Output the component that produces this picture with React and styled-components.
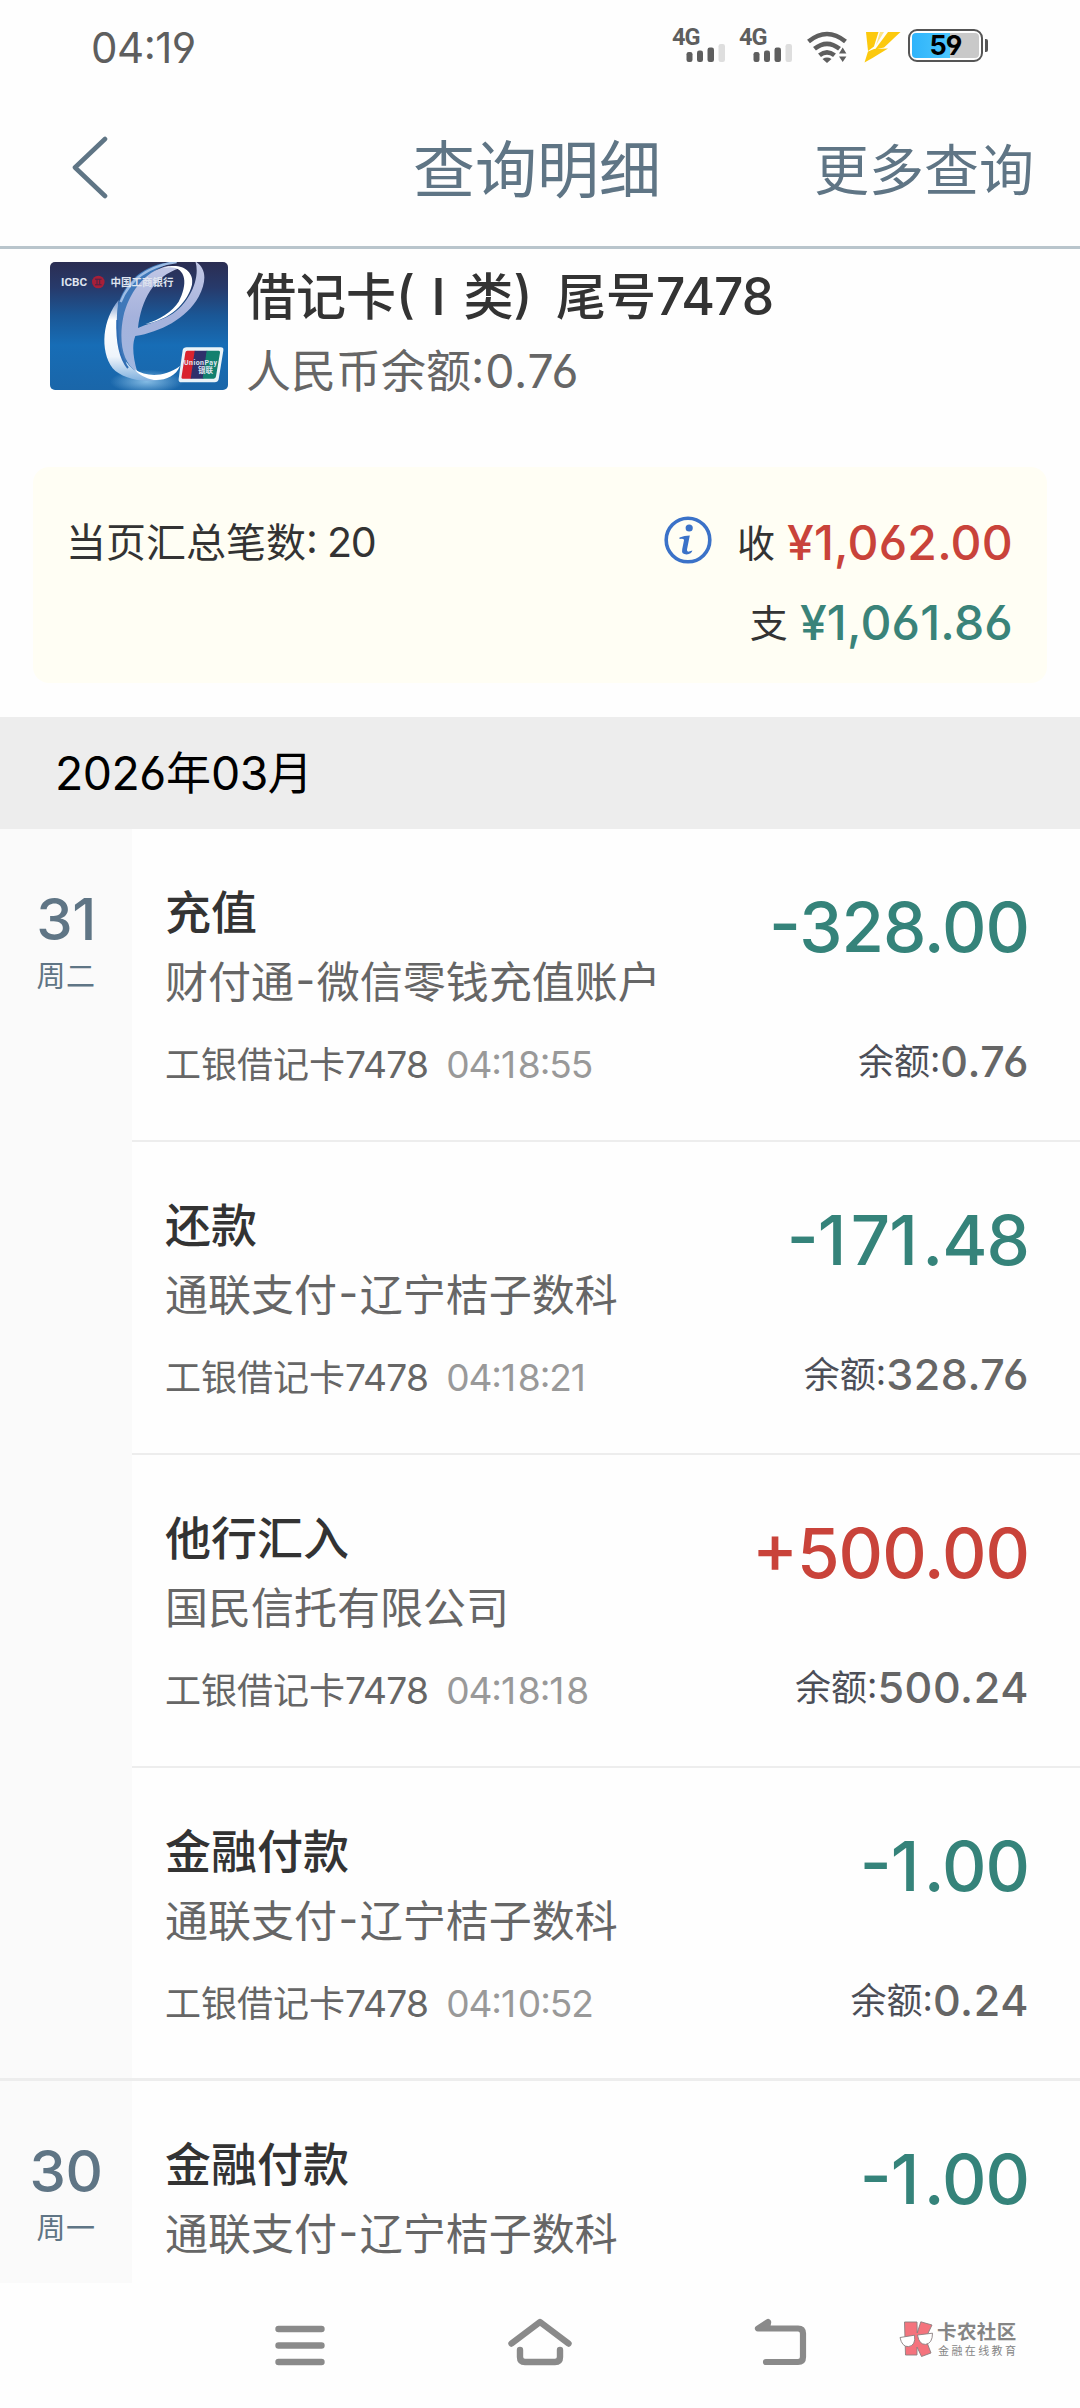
import React from 'react';
import styled, { createGlobalStyle } from 'styled-components';

const days = [
    {
        day: '31',
        week: '周二',
        items: [
            { title: '充值', desc: ['财付通', '微信零钱充值账户'], time: '04:18:55', sign: '-', amount: '328.00', balance: '0.76' },
            { title: '还款', desc: ['通联支付', '辽宁桔子数科'], time: '04:18:21', sign: '-', amount: '171.48', balance: '328.76' },
            { title: '他行汇入', desc: ['国民信托有限公司'], time: '04:18:18', sign: '+', amount: '500.00', balance: '500.24' },
            { title: '金融付款', desc: ['通联支付', '辽宁桔子数科'], time: '04:10:52', sign: '-', amount: '1.00', balance: '0.24' },
        ]
    },
    {
        day: '30',
        week: '周一',
        items: [
            { title: '金融付款', desc: ['通联支付', '辽宁桔子数科'], sign: '-', amount: '1.00' },
        ]
    },
];

// gives the narrow "1" a little more room on its right
function Digits({ value }) {
    return value.split(/(1)/).map((s, i) => s === '1' ? <One key={i}>1</One> : s);
}

function Signal() {
    return (
        <SignalLayout>
            <span>4G</span>
            <svg width="40" height="20" viewBox="0 0 40 20">
                <rect x="0.5" y="9" width="6" height="10" rx="2.2" fill="#5e5e5e" />
                <rect x="11" y="7.5" width="6" height="11.5" rx="2.2" fill="#5e5e5e" />
                <rect x="21.5" y="4.5" width="6.5" height="14.5" rx="2.2" fill="#5e5e5e" />
                <rect x="32.5" y="1" width="6.5" height="18" rx="2.2" fill="#dedede" />
            </svg>
        </SignalLayout>
    );
}

function WifiIcon() {
    return (
        <svg width="40" height="32" viewBox="0 0 40 32" fill="none" stroke="#5e5e5e" strokeWidth="4.6">
            <path d="M1.5 10.5Q20 -4.5 38.5 10.5" />
            <path d="M7.5 17.8Q20 7.8 32.5 17.8" />
            <path d="M12.5 24.3Q20 18.3 27.5 24.3" />
            <path d="M15.5 28Q20 25.2 24.5 28L20 32Z" fill="#5e5e5e" stroke="none" />
            <path d="M35.7 15L41 23.5V32H31V23.5Z" fill="#fefefe" stroke="none" />
            <path d="M35.7 16.5L39.4 22.5H32ZM35.7 31L39.4 25.5H32Z" fill="#5e5e5e" stroke="none" />
        </svg>
    );
}

function BoltIcon() {
    return (
        <svg width="37" height="31" viewBox="0 0 37 31" fill="#fcc90e">
            <path d="M2 0H14.5L10 14.5L4 19Z" />
            <path d="M24 0H36.5L20 15.5L11 17.5Z" />
            <path d="M4 19.5L10 17L24 16.5L8.5 26L0.5 30.5Z" />
            <path d="M16 0H20L12 13Z" opacity="0.5" />
        </svg>
    );
}

function CardImage() {
    return (
        <svg width="178" height="128" viewBox="0 0 178 128">
            <defs>
                <linearGradient id="cardBg" x1="0" y1="0" x2="0" y2="1">
                    <stop offset="0" stopColor="#2b2d52" />
                    <stop offset="0.2" stopColor="#273a6b" />
                    <stop offset="0.42" stopColor="#1a5796" />
                    <stop offset="0.65" stopColor="#176db6" />
                    <stop offset="1" stopColor="#1a66a9" />
                </linearGradient>
                <linearGradient id="crescent" x1="0" y1="0" x2="0" y2="1">
                    <stop offset="0" stopColor="#6f93c9" />
                    <stop offset="0.25" stopColor="#ffffff" />
                    <stop offset="0.7" stopColor="#eef4fb" />
                    <stop offset="1" stopColor="#7fb0de" />
                </linearGradient>
                <linearGradient id="stem" x1="0" y1="0" x2="0" y2="1">
                    <stop offset="0" stopColor="#c3c8e6" />
                    <stop offset="0.5" stopColor="#a5b2dc" />
                    <stop offset="1" stopColor="#9fb7e0" />
                </linearGradient>
                <radialGradient id="glow">
                    <stop offset="0" stopColor="#8fc4ea" stopOpacity="0.9" />
                    <stop offset="1" stopColor="#8fc4ea" stopOpacity="0" />
                </radialGradient>
                <clipPath id="cardClip"><rect width="178" height="128" rx="5" /></clipPath>
            </defs>
            <g clipPath="url(#cardClip)">
                <rect width="178" height="128" fill="url(#cardBg)" />
                <g transform="scale(0.33333) translate(-150 -66)">
                    <ellipse cx="440" cy="425" rx="110" ry="36" fill="url(#glow)" />
                    <path d="M356 180C308 238 298 330 338 385C362 412 420 430 478 420C430 408 388 392 372 352C350 300 350 240 356 180Z" fill="url(#crescent)" />
                    <path d="M520 66C430 70 372 130 354 195C346 250 350 330 380 378C372 300 372 200 420 135C450 98 480 80 520 66Z" fill="#3f78b9" />
                    <path d="M505 78C430 92 385 165 370 230C356 300 366 370 412 396C398 350 396 312 406 288C480 276 560 236 596 170C622 120 618 84 586 64C602 112 570 190 510 226C480 244 436 254 414 264C424 180 460 110 540 84Z" fill="url(#stem)" />
                    <path d="M490 84C560 70 566 130 536 185C518 214 478 240 436 252C508 240 562 190 576 134C584 92 540 66 490 84Z" fill="#fff" />
                    <path d="M362 186C388 120 440 78 530 66" fill="none" stroke="#9dbce4" strokeWidth="7" />
                    <path d="M352 240C350 300 356 350 384 384" fill="none" stroke="#2f6db4" strokeWidth="6" />
                    <path d="M404 388C440 412 494 412 540 378C528 408 496 422 462 420C438 416 414 404 404 388Z" fill="#fff" />
                    <path d="M548 330Q550 322 560 322H662Q672 322 670 332L656 418Q654 427 644 427H545Q534 427 536 416Z" fill="#eaf3f8" />
                    <path d="M562 332H586L574 416H548Q543 416 545 408L556 338Q557 332 562 332Z" fill="#d9232e" />
                    <path d="M584 332H622L610 416H572Z" fill="#2f2f6b" />
                    <path d="M620 332H656Q661 332 660 338L648 409Q647 416 641 416H608Z" fill="#12806f" />
                </g>
                <CardText x="11" y="23.5" $size={10} textLength="26" lengthAdjust="spacingAndGlyphs">ICBC</CardText>
                <circle cx="48.3" cy="20" r="6.3" fill="#a81f38" />
                <path d="M45 17.2H51.6M45 22.8H51.6M47 17.5V22.5M49.7 17.5V22.5" stroke="#4a2449" strokeWidth="1" />
                <CardText x="60.5" y="23.7" $size={10.5} textLength="63">中国工商银行</CardText>
                <CardText x="134" y="103" $size={7} textLength="33">UnionPay</CardText>
                <CardText x="148" y="111" $size={7.5} textLength="15">银联</CardText>
            </g>
        </svg>
    );
}

function InfoIcon() {
    return (
        <svg width="50" height="50" viewBox="0 0 50 50">
            <circle cx="25" cy="25" r="21.8" fill="none" stroke="#3b72c8" strokeWidth="3.6" />
            <circle cx="26.2" cy="13" r="3.6" fill="#3b72c8" />
            <path d="M16.5 22.5Q21.5 20.5 26.8 20.4L24 34.6Q23.6 37 26 36.6L29.4 35.6Q28.6 39.2 23.6 39.4Q18.2 39.4 19.2 34.2L21 25.2Q21.2 23.4 16.5 24Z" fill="#3b72c8" />
        </svg>
    );
}

function Transaction(attr) {
    return (
        <TransactionLayout>
            <div className="left">
                <div className="title">{attr.title}</div>
                <div className="desc">
                    {attr.desc[0]}
                    {attr.desc[1] && <Dash>-</Dash>}
                    {attr.desc[1]}
                </div>
                {attr.time && (
                    <div className="detail">
                        工银借记卡<Num $spacing="-0.02em">7478</Num>
                        <span className="time"><Num><Digits value={attr.time} /></Num></span>
                    </div>
                )}
            </div>
            <div className="right">
                <Amount $income={attr.sign === '+'}>{attr.sign}<Digits value={attr.amount} /></Amount>
                {attr.balance && (
                    <div className="balance">
                        余额:<b>{attr.balance}</b>
                    </div>
                )}
            </div>
        </TransactionLayout>
    );
}

function WatermarkLogo() {
    return (
        <svg width="35" height="36" viewBox="0 0 35 36" stroke="#8a7f80" strokeWidth="0.9">
            <path d="M5.5 1H18L18.2 12L21.8 0.8L33 4L26.5 17.5L32 32L22.5 35.5L18 26V34H6.5Z" fill="#f4737d" />
            <path d="M1 16.5L15.5 14.2Q17 24.5 9.5 25.6Q3 26 1 16.5Z" fill="#fff" />
            <path d="M18.5 14L33.5 12.2Q33.5 22.5 26.5 23.4Q20 23.6 18.5 14Z" fill="#fff" />
        </svg>
    );
}

function App() {
    return (
        <Page>
            <GlobalStyle />
            <StatusBar>
                <div className="clock">04:19</div>
                <div className="icons">
                    <Signal />
                    <Signal />
                    <WifiIcon />
                    <BoltIcon />
                    <Battery><span>59</span></Battery>
                </div>
            </StatusBar>
            <Header>
                <svg width="40" height="64" viewBox="0 0 40 64" fill="none" stroke="#5f7585" strokeWidth="4.6" strokeLinecap="round" strokeLinejoin="round">
                    <path d="M35 4L5 32.5L35 61" />
                </svg>
                <h1>查询明细</h1>
                <div className="more">更多查询</div>
            </Header>
            <CardInfo>
                <CardImage />
                <div>
                    <div className="name">借记卡<Num>(</Num><Roman>Ⅰ</Roman>类<Num>)</Num><span className="tail">尾号<Num $spacing="-0.02em">7478</Num></span></div>
                    <div className="money">人民币余额<Num $spacing="0.8px">:0.76</Num></div>
                </div>
            </CardInfo>
            <Summary>
                <div className="count">当页汇总笔数<Num>: 20</Num></div>
                <div className="totals">
                    <div className="line">
                        <InfoIcon />
                        <span>收</span>
                        <Total $color="#c9433a">¥1,062.00</Total>
                    </div>
                    <div className="line">
                        <span>支</span>
                        <Total $color="#3a8379">¥1,061.86</Total>
                    </div>
                </div>
            </Summary>
            <Month><Num $spacing="-0.01em">2026</Num>年<Num $spacing="-0.01em">03</Num>月</Month>
            <List>
                {days.map(d => (
                    <DayGroup key={d.day}>
                        <div className="date">
                            <div className="day">{d.day}</div>
                            <div className="week">{d.week}</div>
                        </div>
                        <div className="items">
                            {d.items.map((item, i) => <Transaction key={i} {...item} />)}
                        </div>
                    </DayGroup>
                ))}
            </List>
            <NavBar>
                <svg width="50" height="48" viewBox="0 0 50 48" stroke="#8a8a8a" strokeWidth="6.4" strokeLinecap="round">
                    <path d="M3.5 8H46.5M3.5 24.5H46.5M3.5 41H46.5" />
                </svg>
                <svg width="66" height="52" viewBox="0 0 66 52" fill="none" stroke="#8a8a8a" strokeWidth="6.4" strokeLinecap="round" strokeLinejoin="round">
                    <path d="M4.5 26.5L33 5L61.5 26.5" />
                    <path d="M13 33V40Q13 45 18 45H48Q53 45 53 40V33" />
                </svg>
                <svg width="56" height="52" viewBox="0 0 56 52" fill="none" stroke="#8a8a8a" strokeWidth="6.2" strokeLinecap="round" strokeLinejoin="round">
                    <path d="M15 5L5 11.5H45Q50 11.5 50 16.5V40Q50 45 45 45H13" />
                    <path d="M15 6L9 11H14Z" fill="#8a8a8a" />
                </svg>
                <Watermark>
                    <WatermarkLogo />
                    <div>
                        <div className="brand">卡农社区</div>
                        <div className="slogan">金融在线教育</div>
                    </div>
                </Watermark>
            </NavBar>
        </Page>
    );
}

export default App;

const GlobalStyle = createGlobalStyle`
    *{
        box-sizing:border-box;
    }
    body{
        margin:0;
        background:#fefefe;
        font-family:Inter, "Noto Sans CJK SC", sans-serif;
        /* straight-legged six and nine, colon and dash centred on the digits */
        font-feature-settings:"cv03", "cv04", "case";
    }
    svg{
        display:block;
        flex:none;
    }
`;

const Page = styled.div`
    width:1080px;
    height:2408px;
    display:flex;
    flex-direction:column;
    overflow:hidden;
    white-space:nowrap;
`;

/* digits run slightly larger than the Chinese text around them */
const Num = styled.span`
    font-size:1.03em;
    line-height:0;
    letter-spacing:${p => p.$spacing || '-0.03em'};
`;

const One = styled.span`
    margin-right:0.08em;
`;

const Roman = styled.span`
    font-family:"Noto Sans CJK SC", sans-serif;
    line-height:0;
`;

const Dash = styled.span`
    margin:0 1.5px;
    line-height:0;
`;

const StatusBar = styled.div`
    height:94px;
    flex:none;
    display:flex;
    justify-content:space-between;
    padding:0 97px 0 91px;
    color:#5e5e5e;
    .clock{
        font-size:42px;
        line-height:95px;
        letter-spacing:-0.5px;
    }
    .icons{
        display:flex;
        height:33px;
        margin-top:29px;
    }
    .icons > svg{
        margin-top:1.5px;
    }
    .icons > svg:nth-of-type(1){
        margin-left:1px;
        margin-right:17px;
    }
    .icons > svg:nth-of-type(2){
        margin-top:3px;
        margin-right:7px;
    }
`;

const SignalLayout = styled.div`
    width:67px;
    display:flex;
    flex-direction:column;
    span{
        font-family:Roboto, sans-serif;
        font-size:23.5px;
        line-height:17px;
        height:14px;
        font-weight:700;
        letter-spacing:-1px;
    }
    svg{
        margin-left:14px;
    }
`;

const Battery = styled.div`
    width:75px;
    height:33px;
    border:2.5px solid #555;
    border-radius:9px;
    padding:2px;
    position:relative;
    span{
        display:block;
        height:100%;
        border-radius:4px;
        background:linear-gradient(90deg, #2fb4fb 0, #4cc6fd 56%, #c9c9c9 56%);
        color:#000;
        font-size:27px;
        line-height:25px;
        font-weight:700;
        text-align:center;
        letter-spacing:-1px;
    }
    &::after{
        content:"";
        position:absolute;
        right:-7px;
        top:8px;
        width:3.5px;
        height:13px;
        border-radius:0 2px 2px 0;
        background:#555;
    }
`;

const Header = styled.div`
    height:155px;
    flex:none;
    display:grid;
    grid-template-columns:1fr auto 1fr;
    align-items:center;
    padding:0 46px 0 70px;
    border-bottom:3px solid #b9c5cc;
    color:#5f7585;
    svg{
        margin-bottom:7px;
    }
    h1{
        margin:1px 30px 0 0;
        font-size:62px;
        line-height:80px;
        font-weight:400;
    }
    .more{
        font-size:55px;
        line-height:80px;
        text-align:right;
    }
`;

const CardInfo = styled.div`
    height:218px;
    flex:none;
    display:flex;
    padding:13px 0 0 50px;
    .name{
        margin-left:18px;
        font-size:50px;
        line-height:70px;
        font-weight:500;
        color:#333;
    }
    .tail{
        margin-left:25px;
    }
    .money{
        margin:5px 0 0 18px;
        font-size:45px;
        line-height:70px;
        color:#666;
    }
`;

const CardText = styled.text`
    font-family:Roboto, "Noto Sans CJK SC", sans-serif;
    font-size:${p => p.$size}px;
    font-weight:700;
    fill:#dfe4ef;
`;

const Summary = styled.div`
    height:216px;
    flex:none;
    display:flex;
    justify-content:space-between;
    margin:0 33px 34px;
    padding:36px 34px 0 33px;
    border-radius:16px;
    background:#fffef4;
    color:#333;
    font-size:40px;
    line-height:80px;
    .line{
        height:80px;
        display:flex;
        justify-content:flex-end;
        align-items:center;
    }
    .line svg{
        margin:-6px 24px 0 0;
    }
    .line span{
        font-size:38px;
        margin-right:12px;
    }
`;

const Total = styled.b`
    font-size:48px;
    font-weight:500;
    color:${p => p.$color};
    letter-spacing:0.2px;
`;

const Month = styled.div`
    height:112px;
    flex:none;
    padding-left:55px;
    background:#ededed;
    color:#000;
    font-size:45px;
    line-height:114px;
`;

const List = styled.div`
    height:1454px;
    flex:none;
    overflow:hidden;
`;

const DayGroup = styled.div`
    display:flex;
    border-bottom:3px solid #ededed;
    .date{
        width:132px;
        flex:none;
        padding-top:56px;
        background:#fafafa;
        color:#5f7585;
        text-align:center;
    }
    .day{
        font-size:58px;
        line-height:69px;
        font-weight:500;
        letter-spacing:-0.5px;
    }
    .week{
        margin-top:1px;
        font-size:29px;
        line-height:43px;
        letter-spacing:0.5px;
    }
    .items{
        flex:1;
    }
    .items > div:last-child{
        height:310px;
        border-bottom:0;
    }
`;

const TransactionLayout = styled.div`
    height:313px;
    display:flex;
    justify-content:space-between;
    padding:53px 51px 0 33px;
    border-bottom:2px solid #ededed;
    .title{
        font-size:46px;
        line-height:60px;
        font-weight:500;
        color:#333;
    }
    .desc{
        margin-top:10px;
        font-size:43px;
        line-height:60px;
        color:#666;
    }
    .detail{
        margin-top:28px;
        font-size:36px;
        line-height:50px;
        color:#666;
    }
    .time{
        margin-left:18px;
        color:#999;
    }
    .right{
        text-align:right;
    }
    .balance{
        margin-top:70px;
        font-size:36px;
        line-height:50px;
        color:#4c4e57;
    }
    .balance b{
        font-size:43px;
        line-height:0;
        font-weight:500;
        color:#666;
        letter-spacing:0.6px;
        vertical-align:-2px;
    }
`;

const Amount = styled.div`
    height:85px;
    padding-top:5px;
    font-size:69px;
    line-height:80px;
    font-weight:500;
    letter-spacing:-1px;
    color:${p => p.$income ? '#c9433a' : '#35837a'};
`;

const NavBar = styled.div`
    flex:1;
    display:flex;
    align-items:flex-start;
    padding:34px 0 0 275px;
    svg:nth-of-type(1){
        margin-top:4px;
    }
    & > svg:nth-of-type(2){
        margin:0 180px 0 182px;
    }
`;

const Watermark = styled.div`
    display:flex;
    margin:4px 0 0 90px;
    color:#858585;
    svg:nth-of-type(1){
        margin-top:0;
    }
    .brand{
        margin-left:3px;
        font-size:19.5px;
        line-height:22px;
        font-weight:700;
        letter-spacing:0.4px;
    }
    .slogan{
        margin-left:4px;
        font-size:11px;
        line-height:16px;
        letter-spacing:2.4px;
    }
`;
